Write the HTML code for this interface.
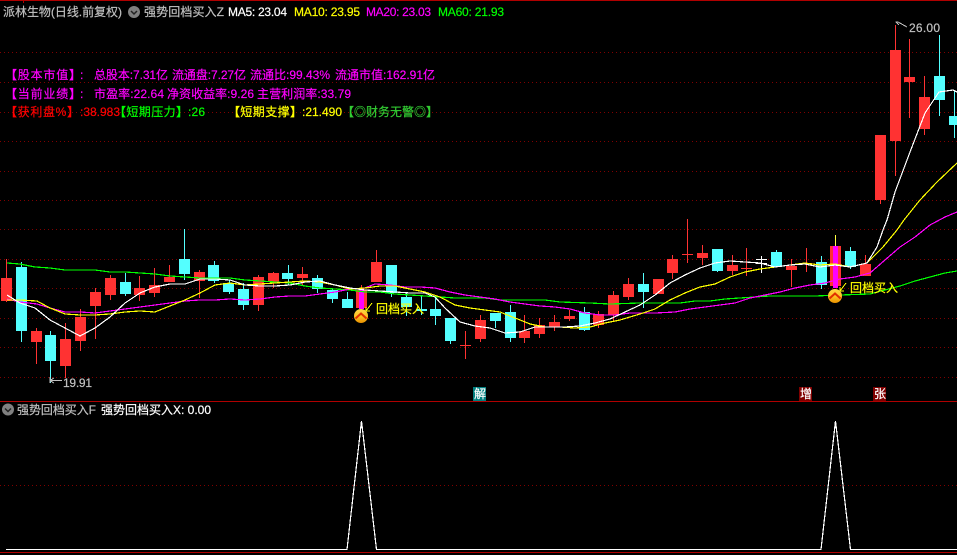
<!DOCTYPE html>
<html><head><meta charset="utf-8"><style>
html,body{margin:0;padding:0;background:#000;width:957px;height:555px;overflow:hidden}
svg{display:block}
text{font-family:"Liberation Sans","WenQuanYi Zen Hei","Noto Sans CJK SC",sans-serif;font-size:12px;white-space:pre;stroke-width:.2}
tspan.b{font-family:"Noto Sans CJK SC",sans-serif;font-weight:700}
text[fill="#ff00ff"]{stroke:#ff00ff}
text[fill="#ffff00"]{stroke:#ffff00}
text[fill="#00ff00"]{stroke:#00ff00}
text[fill="#ff0000"]{stroke:#ff0000}
text[fill="#ffffff"]{stroke:#ffffff}
text[fill="#c0c0c0"]{stroke:#c0c0c0}
text[fill="#33cc33"]{stroke:#33cc33}
</style></head><body>
<svg width="957" height="555" viewBox="0 0 957 555" xmlns="http://www.w3.org/2000/svg">
<defs>
<linearGradient id="c" x1="0" y1="0" x2="0" y2="1"><stop offset="0" stop-color="#ffd848"/><stop offset="0.55" stop-color="#ffc020"/><stop offset="1" stop-color="#e89000"/></linearGradient>
</defs>
<rect width="957" height="555" fill="#000"/>
<g shape-rendering="crispEdges">
<path d="M0 52.5H957M0 82.5H957M0 112.5H957M0 141.5H957M0 171.5H957M0 200.5H957M0 229.5H957M0 259.5H957M0 288.5H957M0 318.5H957M0 347.5H957M0 377.5H957M0 485.5H957" stroke="#800000" stroke-width="1" stroke-dasharray="1 3" fill="none"/>
<path d="M0 0.5H957M23.5 0V3M0 401.5H957M0 552.5H957" stroke="#b00000" stroke-width="1" fill="none"/>

<path fill="none" stroke="#ff3232" stroke-width="1" d="M6.5 259V302M36.5 328V364M65.5 323V378M80.5 309V351M95.5 288V339M110.5 275V300M139.5 276V301M154.5 268V297M169.5 265V282M199.5 270V298M258.5 275V311M273.5 272V288M302.5 267V285M361.5 285V308M376.5 250V282M465.5 331V359M480.5 315V342M524.5 315V343M539.5 318V338M554.5 315V331M569.5 310V321M598.5 311V328M613.5 291V321M628.5 278V300M672.5 255V279M687.5 219V263M702.5 245V265M732.5 255V275M746.5 248V276M791.5 259V287M806.5 248V272M865.5 255V276M880.5 135V204M895.5 25V176M909.5 39V118M924.5 76V135"/>
<path fill="#ff3232" d="M1 278h11v23h-11zM31 331h11v11h-11zM60 339h11v27h-11zM75 317h11v24h-11zM90 292h11v14h-11zM105 278h11v17h-11zM134 288h11v7h-11zM149 285h11v8h-11zM164 277h11v5h-11zM194 272h11v9h-11zM253 277h11v28h-11zM268 273h11v9h-11zM297 274h11v4h-11zM356 290h11v18h-11zM371 262h11v20h-11zM460 345h11v1h-11zM475 320h11v19h-11zM519 331h11v7h-11zM534 325h11v9h-11zM549 322h11v5h-11zM564 316h11v3h-11zM593 314h11v11h-11zM608 295h11v20h-11zM623 284h11v13h-11zM653 279h11v15h-11zM667 259h11v14h-11zM682 254h11v1h-11zM697 253h11v5h-11zM727 265h11v6h-11zM741 268h11v1h-11zM786 266h11v4h-11zM801 263h11v1h-11zM830 246h11v40h-11zM860 264h11v12h-11zM875 135h11v65h-11zM890 50h11v91h-11zM904 77h11v5h-11zM919 97h11v32h-11z"/>

<path fill="none" stroke="#54ffff" stroke-width="1" d="M21.5 262V342M50.5 331V383M125.5 273V296M184.5 229V280M214.5 261V283M229.5 280V294M243.5 283V310M288.5 265V285M317.5 275V293M332.5 288V303M347.5 292V308M391.5 265V297M406.5 293V316M421.5 296V315M435.5 295V325M450.5 318V344M495.5 313V328M510.5 305V342M584.5 307V331M643.5 273V308M717.5 249V272M776.5 250V267M821.5 256V289M850.5 247V269M939.5 35V116M954.5 90V138"/>
<path fill="#54ffff" d="M16 267h11v64h-11zM45 335h11v26h-11zM120 282h11v12h-11zM179 259h11v15h-11zM208 265h11v16h-11zM223 283h11v9h-11zM238 289h11v16h-11zM282 273h11v6h-11zM312 278h11v11h-11zM327 290h11v9h-11zM342 299h11v9h-11zM386 265h11v28h-11zM401 297h11v10h-11zM416 309h11v2h-11zM430 309h11v7h-11zM445 318h11v23h-11zM490 313h11v8h-11zM505 312h11v26h-11zM579 312h11v18h-11zM638 284h11v8h-11zM712 249h11v22h-11zM771 252h11v15h-11zM816 262h11v23h-11zM845 251h11v16h-11zM934 76h11v24h-11zM949 116h8v9h-8z"/>

<path fill="none" stroke="#fff" stroke-width="1" d="M756 259.5H767M756 263.5H767M761.5 256V273"/>
<path fill="none" stroke="#ffff40" stroke-width="1" d="M835.5 235V246"/>
<path fill="#ff00ff" d="M359 288h5v21h-5zM833 246h5v42h-5z"/>

<polyline fill="none" stroke="#00ff00" stroke-width="1.2" points="7,263 20,264 35,267 50,268 65,270 95,270 110,272 125,272 140,273 155,274 170,276 185,277 200,278 230,278 245,280 260,281 275,282 290,283 305,286 320,288 335,289 350,290 365,292 380,292 395,294 410,295 425,296 440,297 455,298 485,298 500,300 545,300 560,302 590,303 610,304 640,303 680,303 695,301 710,301 725,299 740,298 755,297 770,296 815,296 840,295 870,294 885,290 900,286 915,281 930,277 945,273 957,271"/>
<polyline fill="none" stroke="#ff00ff" stroke-width="1.2" points="7,299 20,302 37,304 50,308 65,312 80,312 95,313 110,311 125,309 140,307 155,305 170,303 185,301 200,300 215,300 230,299 245,300 260,299 275,297 290,296 305,296 320,294 335,292 350,289 365,288 375,284 390,285 405,287 420,287 435,288 450,292 465,295 480,297 495,299 510,302 525,304 540,306 555,307 570,309 585,313 600,315 615,315 630,313 655,313 675,312 690,309 705,307 720,305 735,303 750,298 765,295 780,292 795,288 810,285 825,283 840,279 855,277 870,273 885,260 900,247 915,237 930,225 945,217 957,212"/>
<polyline fill="none" stroke="#ffff00" stroke-width="1.2" points="7,300 20,300 37,301 50,308 65,314 80,315 95,315 110,314 125,312 140,311 155,312 170,306 185,300 200,293 215,285 230,283 245,285 260,284 275,283 290,282 305,281 320,282 335,285 350,289 365,288 380,286 395,286 410,289 425,292 440,297 455,305 470,308 485,310 500,312 515,318 530,324 545,327 560,327 575,328 590,327 605,323 620,320 640,314 655,309 670,300 685,293 700,287 715,284 730,277 745,272 760,269 775,267 790,265 805,263 820,265 835,264 850,267 867,263 883,247 897,230 904,220 920,200 937,182 957,163"/>
<polyline fill="none" stroke="#ffffff" stroke-width="1.2" points="7,295 20,303 35,308 50,320 65,328 80,336 95,328 110,317 125,303 140,293 155,287 170,284 185,284 200,279 215,279 230,280 245,285 260,286 275,286 290,285 305,282 320,281 335,285 350,288 365,290 380,291 395,292 410,293 425,293 435,297 445,308 460,322 475,326 490,328 505,333 520,332 535,327 550,327 565,327 580,326 595,323 610,319 625,312 640,305 655,295 670,283 685,275 700,268 715,263 730,261 745,262 760,263 775,267 790,265 805,264 820,267 835,265 850,267 867,263 877,247 883,230 887,220 895,192 910,152 925,113 939,92 953,90 957,92"/>

<polyline fill="none" stroke="#ffffff" stroke-width="1.2" points="6,549.5 347,549.5 361.5,421 376.5,549.5 821,549.5 835.5,421 850.5,549.5 957,549.5"/>

<path fill="none" stroke="#ffff00" stroke-width="1" d="M372 303L366 311M366 311V307M366 311H370M846 283L840 291M840 291V287M840 291H844"/>
<path fill="none" stroke="#c0c0c0" stroke-width="1" d="M50 377V383M50 380.5H62M50 380.5L54 378M50 380.5L54 383M895.5 22H898L907 27M896 22L899 25"/>

<rect x="473" y="387" width="13" height="14" fill="#008080"/>
<rect x="799" y="387" width="13" height="14" fill="#800000"/>
<rect x="873" y="387" width="13" height="14" fill="#800000"/>
</g>

<circle cx="361" cy="316" r="7" fill="url(#c)"/>
<path d="M355.500 318.500L361 313.500L366.500 318.500" fill="none" stroke="#e03000" stroke-width="2"/>
<circle cx="835" cy="296" r="7" fill="url(#c)"/>
<path d="M829.500 298.500L835 293.500L840.500 298.500" fill="none" stroke="#e03000" stroke-width="2"/>

<circle cx="134" cy="12" r="6" fill="#808080"/>
<path d="M131 11L134 14L137 11" fill="none" stroke="#222" stroke-width="1.500"/>
<circle cx="8" cy="409.500" r="6" fill="#808080"/>
<path d="M5 408.500L8 411.500L11 408.500" fill="none" stroke="#222" stroke-width="1.500"/>

<text x="3" y="16" fill="#c0c0c0" textLength="119">派林生物(日线.前复权)</text>
<text x="144" y="16" fill="#c0c0c0" textLength="80">强势回档买入Z</text>
<text x="228" y="16" fill="#ffffff" textLength="59">MA5: 23.04</text>
<text x="294" y="16" fill="#ffff00" textLength="66">MA10: 23.95</text>
<text x="366" y="16" fill="#ff00ff" textLength="65">MA20: 23.03</text>
<text x="438" y="16" fill="#00ff00" textLength="66">MA60: 21.93</text>

<text x="5" y="79" fill="#ff00ff" textLength="76"><tspan class="b">【</tspan>股本市值<tspan class="b">】</tspan></text>
<text x="80" y="79" fill="#ff00ff">:</text>
<text x="94" y="79" fill="#ff00ff" textLength="74">总股本:7.31亿</text>
<text x="172" y="79" fill="#ff00ff" textLength="74">流通盘:7.27亿</text>
<text x="250" y="79" fill="#ff00ff" textLength="80">流通比:99.43%</text>
<text x="335" y="79" fill="#ff00ff" textLength="100">流通市值:162.91亿</text>

<text x="5" y="98" fill="#ff00ff" textLength="76"><tspan class="b">【</tspan>当前业绩<tspan class="b">】</tspan></text>
<text x="80" y="98" fill="#ff00ff">:</text>
<text x="94" y="98" fill="#ff00ff" textLength="70">市盈率:22.64</text>
<text x="167" y="98" fill="#ff00ff" textLength="87">净资收益率:9.26</text>
<text x="257" y="98" fill="#ff00ff" textLength="94">主营利润率:33.79</text>

<text x="5" y="116" fill="#ff0000" textLength="74"><tspan class="b">【</tspan>获利盘%<tspan class="b">】</tspan></text>
<text x="80" y="116" fill="#ff0000" textLength="40">:38.983</text>
<text x="114" y="116" fill="#00ff00" textLength="74"><tspan class="b">【</tspan>短期压力<tspan class="b">】</tspan></text>
<text x="188" y="116" fill="#00ff00" textLength="17">:26</text>
<text x="228" y="116" fill="#ffff00" textLength="74"><tspan class="b">【</tspan>短期支撑<tspan class="b">】</tspan></text>
<text x="302" y="116" fill="#ffff00" textLength="40">:21.490</text>
<text x="342" y="116" fill="#33cc33" textLength="96"><tspan class="b">【</tspan>◎财务无警◎<tspan class="b">】</tspan></text>

<text x="376" y="313" fill="#ffff00">回档买入</text>
<text x="850" y="292" fill="#ffff00">回档买入</text>
<text x="63" y="387" fill="#c0c0c0" textLength="29">19.91</text>
<text x="909" y="32" fill="#c0c0c0" textLength="31">26.00</text>
<text x="474" y="398" fill="#ffffff">解</text>
<text x="800" y="398" fill="#ffffff">增</text>
<text x="874" y="398" fill="#ffffff">张</text>

<text x="17" y="414" fill="#c0c0c0" textLength="79">强势回档买入F</text>
<text x="101" y="414" fill="#ffffff" textLength="110">强势回档买入X: 0.00</text>
</svg>
</body></html>
